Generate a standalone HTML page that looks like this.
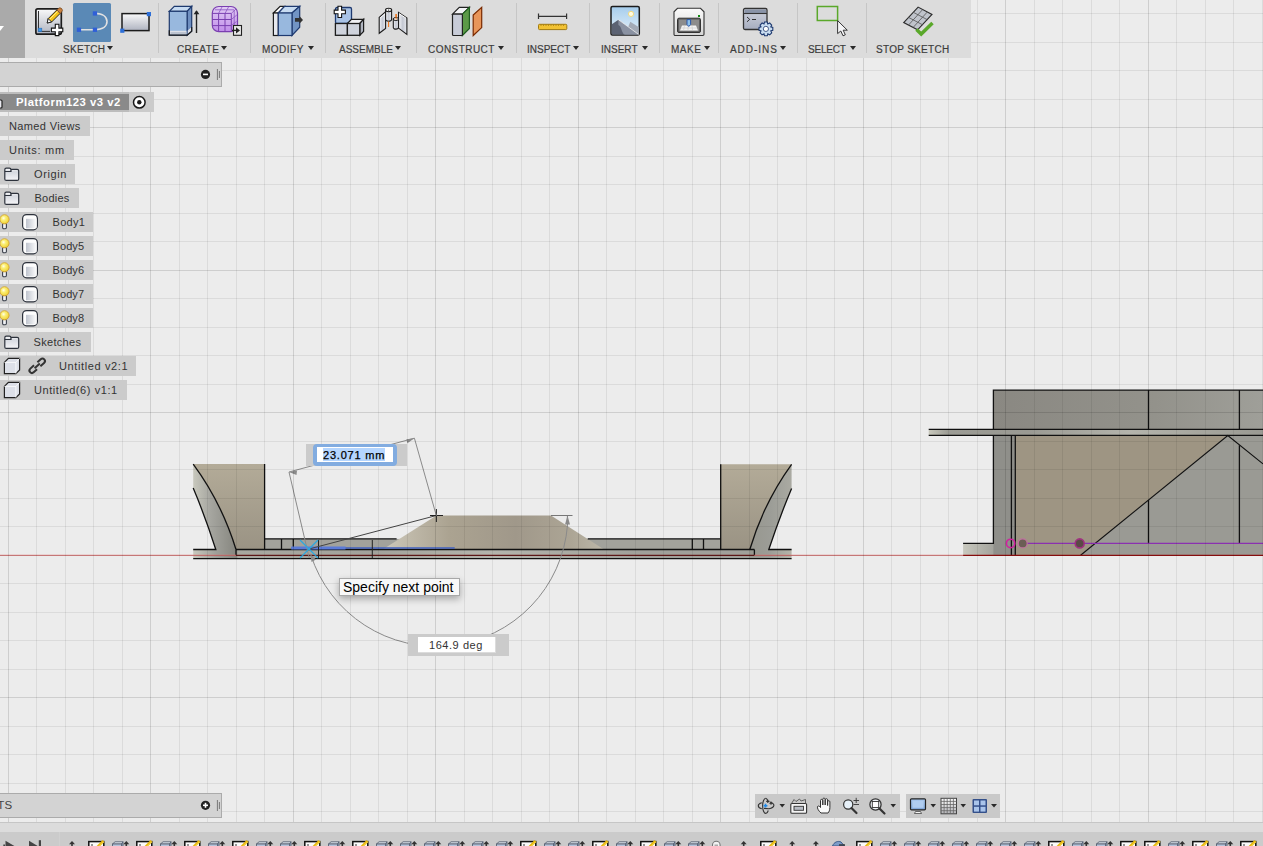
<!DOCTYPE html>
<html><head><meta charset="utf-8"><style>
*{margin:0;padding:0;box-sizing:border-box}
html,body{width:1263px;height:846px;overflow:hidden;background:#ececec;font-family:"Liberation Sans",sans-serif;position:relative}
.a{position:absolute}
.tb{left:0;top:0;width:971px;height:58px;background:#dcdcdc}
.lbl{position:absolute;top:44px;font-size:10px;-webkit-text-stroke:0.2px #3c3c3c;color:#3c3c3c;white-space:nowrap;letter-spacing:0}
.tri{position:absolute;top:46px;width:0;height:0;border-left:3px solid transparent;border-right:3px solid transparent;border-top:4px solid #2a2a2a}
.sep{position:absolute;top:3px;width:1px;height:50px;background:#c6c6c6}
.row{position:absolute;left:0;height:20px;background:#cbcbcb;font-size:11px;color:#333;white-space:nowrap}
.row span{position:absolute;top:4px}
</style></head><body>
<svg class="a" style="left:0;top:0" width="1263" height="846">
<g id="geo"><defs>
<linearGradient id="tanL" x1="0" y1="0" x2="0" y2="1"><stop offset="0" stop-color="#b3ab98"/><stop offset="1" stop-color="#9a9384"/></linearGradient>
<linearGradient id="greyL" x1="0" y1="0" x2="1" y2="0"><stop offset="0" stop-color="#c8c8bd"/><stop offset="0.4" stop-color="#a6a6a0"/><stop offset="1" stop-color="#86867f"/></linearGradient>
<linearGradient id="greyR" x1="1" y1="0" x2="0" y2="0"><stop offset="0" stop-color="#aaaaa2"/><stop offset="0.5" stop-color="#9c9d97"/><stop offset="1" stop-color="#97978f"/></linearGradient>
<linearGradient id="baseG" x1="0" y1="0" x2="1" y2="0"><stop offset="0" stop-color="#c8c8bd"/><stop offset="0.038" stop-color="#9f9f99"/><stop offset="0.0715" stop-color="#86867f"/><stop offset="0.075" stop-color="#a8a8a0"/><stop offset="0.3" stop-color="#a2a29c"/><stop offset="0.5" stop-color="#b4b4ac"/><stop offset="0.75" stop-color="#a0a09a"/><stop offset="0.928" stop-color="#a0a09a"/><stop offset="0.93" stop-color="#97978f"/><stop offset="0.962" stop-color="#9c9c96"/><stop offset="1" stop-color="#b5b5aa"/></linearGradient>
<linearGradient id="trapG" x1="0" y1="0" x2="1" y2="0"><stop offset="0" stop-color="#cdc8ba"/><stop offset="0.3" stop-color="#aba391"/><stop offset="0.6" stop-color="#a0988a"/><stop offset="0.85" stop-color="#aca595"/><stop offset="1" stop-color="#bcb7a9"/></linearGradient>
<linearGradient id="blkG" x1="0" y1="0" x2="1" y2="0"><stop offset="0" stop-color="#8a8882"/><stop offset="0.6" stop-color="#93928b"/><stop offset="1" stop-color="#9f9f99"/></linearGradient>
<linearGradient id="barG" x1="0" y1="0" x2="1" y2="0"><stop offset="0" stop-color="#c8c8bc"/><stop offset="0.06" stop-color="#9c9c95"/><stop offset="0.3" stop-color="#9a9a93"/><stop offset="0.6" stop-color="#b4b4ac"/><stop offset="0.85" stop-color="#a4a49c"/><stop offset="1" stop-color="#9a9a93"/></linearGradient>
<linearGradient id="stepG" x1="0" y1="0" x2="1" y2="0"><stop offset="0" stop-color="#c8c8be"/><stop offset="1" stop-color="#8a8a85"/></linearGradient>
</defs>
<!-- LEFT/RIGHT PART -->
<polygon points="193.2,549.5 791.6,549.5 791.6,558.6 193.2,558.6" fill="url(#baseG)"/>
<rect x="264.6" y="538.9" width="456.1" height="10.6" fill="#a2a29c"/>
<path d="M193.2 464.1Q221.7 502.8 236 549.5V551H215.8V549.5Q205 516 193.2 488.1z" fill="url(#greyL)"/>
<path d="M193.2 464.1H264.6V549.5H236Q221.7 502.8 193.2 464.1z" fill="url(#tanL)"/>
<path d="M791.6 464.3Q763.6 503 749.8 549.5V551H768.8V549.5Q780 516 791.6 488.4z" fill="url(#greyR)"/>
<path d="M720.7 464.3H791.6Q763.6 503 749.8 549.5H720.7z" fill="url(#tanL)"/>
<polygon points="382.7,549.5 436.4,515.5 551,515.5 604.1,549.5" fill="url(#trapG)"/>
<g stroke="#111" stroke-width="1.3" fill="none">
<path d="M193.2 464.1Q221.7 502.8 236 549.5M193.2 488.1Q205 516 215.8 549.5H193.2M264.6 464.1V549.5M264.6 538.9H396.6M587.7 538.9H720.7M281.5 538.9V549.5M293.3 538.9V549.5M692.3 538.9V549.5M703.5 538.9V549.5"/>
<path d="M791.6 464.3Q763.6 503 749.8 549.5M791.6 488.4Q780 516 768.8 549.5H791.6M720.7 464.3V549.5"/>
<path d="M236 549.5H754.4M236 549.5V555.3M754.4 549.5V555.3M193.2 558.6H791.6"/>
</g>
<path d="M236 555.3H754.4" stroke="#6a1a1a" stroke-width="1.2"/>
<path d="M0 555.3H236M754.4 555.3H963" stroke="#e07070" stroke-width="1"/>
<!-- RIGHT OBJECT -->
<rect x="993.4" y="390.1" width="270" height="39.4" fill="url(#blkG)"/>
<rect x="928.7" y="429.4" width="335" height="5.9" fill="url(#barG)"/>
<rect x="963.1" y="543.4" width="52" height="11.9" fill="url(#stepG)"/>
<rect x="993.4" y="435.3" width="22" height="120" fill="#8f8f8a"/>
<polygon points="1015.3,435.3 1227.8,435.3 1080.6,555.3 1015.3,555.3" fill="#9e9583"/>
<polygon points="1227.8,435.3 1263,435.3 1263,555.3 1080.6,555.3" fill="#9a9a94"/>
<g stroke="#111" stroke-width="1.3" fill="none">
<path d="M993.4 429.4V390.1H1263M928.7 429.4H1263M928.7 435.3H1263M1148.5 390.1V429.4M1239.4 390.1V429.4"/>
<path d="M993.4 435.3V543.4H963.1M1011.4 435.3V555.3M1015.3 435.3V555.3M1148.5 500V543.4M1239.4 445.2V543.4"/>
<path d="M1080.6 555.3L1227.8 435.5L1263 463.9" stroke-width="1.1"/>
</g>
<path d="M963.1 555.3H1263" stroke="#9a1010" stroke-width="1.3"/>
<path d="M1022 543.4H1263" stroke="#8a30b0" stroke-width="1.2"/>
<circle cx="1010.6" cy="543.4" r="4.2" fill="none" stroke="#d020a0" stroke-width="1.6"/>
<circle cx="1022.7" cy="543.4" r="4.5" fill="#6a5e55" stroke="#c070a0" stroke-width="1.2"/>
<circle cx="1079.7" cy="543.4" r="4.5" fill="#5a4a45" stroke="#a03080" stroke-width="1.6"/>
<!-- SKETCH OVERLAY -->
<path d="M291.3 548H454.7" stroke="#3f5fbf" stroke-width="1.6"/>
<path d="M291.3 548H345.5" stroke="#5a7ad8" stroke-width="3"/>
<path d="M318.5 540V558M372.3 540V558" stroke="#222" stroke-width="1"/>
<path d="M309 549L436.4 515.5" stroke="#444" stroke-width="1"/>
<path d="M436.4 509V522M430 515.5H443" stroke="#222" stroke-width="1"/>
<path d="M551 515.5H572.5M567.4 515.5V525" stroke="#777" stroke-width="1"/>
<g stroke="#8a8a8a" stroke-width="1" fill="none">
<path d="M289 472L309.2 558M289 472L414.4 438.2L436.4 515.8"/>
<path d="M567.5 525.1A131.7 131.7 0 0 1 310.8 554.8"/>
</g>
<path d="M289 472l8 -1.5l-0.5 4.5z M414.4 438.2l-8 1l1 4z M310.5 554.5l5.5 5l-4.5 2.5z M567.5 515.5l2.5 9l-5 0z" fill="#8a8a8a"/>
<path d="M300 540L318 558M318 540L300 558" stroke="#2aa8e0" stroke-width="1.2"/>
</g>
<path d="M36.5 0V846M65.5 0V846M93.5 0V846M122.5 0V846M179.5 0V846M207.5 0V846M236.5 0V846M264.5 0V846M321.5 0V846M350.5 0V846M378.5 0V846M407.5 0V846M464.5 0V846M492.5 0V846M521.5 0V846M549.5 0V846M606.5 0V846M635.5 0V846M663.5 0V846M692.5 0V846M749.5 0V846M777.5 0V846M806.5 0V846M834.5 0V846M891.5 0V846M920.5 0V846M948.5 0V846M977.5 0V846M1034.5 0V846M1062.5 0V846M1091.5 0V846M1119.5 0V846M1176.5 0V846M1205.5 0V846M1233.5 0V846M1262.5 0V846M0 13.5H1263M0 42.5H1263M0 70.5H1263M0 99.5H1263M0 156.5H1263M0 184.5H1263M0 213.5H1263M0 241.5H1263M0 298.5H1263M0 327.5H1263M0 355.5H1263M0 384.5H1263M0 441.5H1263M0 469.5H1263M0 498.5H1263M0 526.5H1263M0 583.5H1263M0 612.5H1263M0 640.5H1263M0 669.5H1263M0 726.5H1263M0 754.5H1263M0 783.5H1263M0 811.5H1263" stroke="rgba(0,0,0,0.072)" stroke-width="1" fill="none"/>
<path d="M8.5 0V846M150.5 0V846M293.5 0V846M435.5 0V846M578.5 0V846M720.5 0V846M863.5 0V846M1005.5 0V846M1148.5 0V846M0 127.5H1263M0 270.5H1263M0 412.5H1263M0 555.5H1263M0 697.5H1263M0 840.5H1263" stroke="rgba(0,0,0,0.125)" stroke-width="1" fill="none"/>
</svg>
<div class="a tb">
 <div class="a" style="left:0;top:0;width:25px;height:58px;background:#aaaaaa"></div>
 <div class="a" style="left:72.5px;top:2.5px;width:38px;height:39px;background:#5a89b6;border-radius:1.5px"></div>
 <svg class="a" style="left:0;top:0" width="971" height="58">
<defs>
<linearGradient id="gW" x1="0" y1="0" x2="0" y2="1"><stop offset="0" stop-color="#fafafa"/><stop offset="1" stop-color="#aeb3c0"/></linearGradient>
<linearGradient id="gPu" x1="0" y1="0" x2="0" y2="1"><stop offset="0" stop-color="#d6b8ef"/><stop offset="1" stop-color="#b27ae6"/></linearGradient>
<linearGradient id="gSky" x1="0" y1="0" x2="0" y2="1"><stop offset="0" stop-color="#a6cdec"/><stop offset="1" stop-color="#e4f1fa"/></linearGradient>
<linearGradient id="gMk" x1="0" y1="0" x2="0" y2="1"><stop offset="0" stop-color="#fbfbfb"/><stop offset="1" stop-color="#d4d4d4"/></linearGradient>
<linearGradient id="gAd" x1="0" y1="0" x2="0" y2="1"><stop offset="0" stop-color="#d2d5de"/><stop offset="1" stop-color="#a6adbf"/></linearGradient>
</defs>
<!-- left arrow -->
<path d="M0 26H4L0 31z" fill="#fff"/>
<!-- create sketch -->
<rect x="35.9" y="8.8" width="25.4" height="25.4" rx="1.8" fill="url(#gW)" stroke="#1c1c1c" stroke-width="1.7"/>
<path d="M38.5 11V31.4H50" stroke="#333" stroke-width="1" fill="none"/>
<rect x="38.2" y="28.2" width="3.6" height="3.4" fill="#3f9bef" stroke="#2a6ab0" stroke-width="0.6"/>
<g transform="translate(47.2 23) rotate(-45)">
<path d="M0 0L3.8 -2.4H16V2.4H3.8z" fill="#f4c31a" stroke="#222" stroke-width="0.9"/>
<path d="M3.8 -0.8H16" stroke="#fff3a0" stroke-width="0.8"/>
<path d="M0 0L3.8 -2.4V2.4z" fill="#fff" stroke="#222" stroke-width="0.9"/>
<path d="M16 -2.4H18A2.4 2.4 0 0 1 18 2.4H16z" fill="#c9803f" stroke="#7a4a20" stroke-width="0.7"/>
</g>
<path d="M55.3 24.2h3.6v3.9h3.9v3.6h-3.9v3.9h-3.6v-3.9h-3.9v-3.6h3.9z" fill="#fff" stroke="#111" stroke-width="1.1"/>
<!-- line/arc active -->
<path d="M79 29.7H95M95 13.4C103 13.4 107 17 107 21.6C107 26.2 103 29.7 95 29.7" stroke="#e2e2e2" stroke-width="1.6" fill="none"/>
<rect x="76.8" y="27.6" width="4.3" height="4.3" fill="#2f5fd8"/><rect x="92.8" y="27.6" width="4.3" height="4.3" fill="#2f5fd8"/><rect x="92.8" y="11.3" width="4.3" height="4.3" fill="#2f5fd8"/>
<!-- rectangle -->
<rect x="122" y="13.6" width="27" height="17" fill="url(#gW)" stroke="#1c1c1c" stroke-width="1.5"/>
<rect x="146.8" y="12" width="4.2" height="4.2" fill="#2d6fd8"/><rect x="120.2" y="28.6" width="4.2" height="4.2" fill="#2d6fd8"/>
<!-- extrude -->
<path d="M169.3 11.3L174.3 6.3H191.7L187.1 11.3z" fill="#c8dcf2" stroke="#1e3a6e" stroke-width="1.2"/>
<path d="M187.1 11.3L191.7 6.3V31.2L187.1 35.1z" fill="#6f8fc0" stroke="#1e3a6e" stroke-width="1.2"/>
<rect x="169.3" y="11.3" width="17.8" height="23.8" fill="#98b8de" stroke="#1e3a6e" stroke-width="1.2"/>
<path d="M169.9 30.8H186.5V34.5H169.9z" fill="#dde0e8"/><path d="M170.5 32H186V34H170.5z" fill="#bcc3d0"/>
<path d="M187.7 30.6L191.1 27.6V31L187.7 34.4z" fill="#dde0e8"/>
<path d="M169.3 30.2V35.1H187.1L191.7 31.2V27" fill="none" stroke="#1c1c1c" stroke-width="1.2"/>
<path d="M196.5 33V11" stroke="#222" stroke-width="1.4"/><path d="M193.6 14.2L196.5 10.2L199.4 14.2z" fill="#222"/>
<!-- purple mesh -->
<defs><linearGradient id="gPu2" x1="0" y1="0" x2="0" y2="1"><stop offset="0" stop-color="#e2cdf5"/><stop offset="1" stop-color="#c08de9"/></linearGradient></defs>
<rect x="212.3" y="6.5" width="25.2" height="25.2" rx="6.5" fill="url(#gPu2)" stroke="#7a3fb0" stroke-width="1.2"/>
<path d="M212.3 13.4H231.3V31.7M218.6 13.4V31.7M225 13.4V31.7M212.3 19.5H231.3M212.3 25.6H231.3" stroke="#7a3fb0" stroke-width="1" fill="none"/>
<path d="M215 9.8H234M218.6 13.4L222 7M225 13.4L228.5 7M231.3 13.4L236 9M231.3 19.5L236.8 15M231.3 25.6L236.5 21.5M234.2 10V28" stroke="#8a55c0" stroke-width="0.8" fill="none"/>
<rect x="233.5" y="25.5" width="8" height="9.8" fill="#e8e8e8" stroke="#222" stroke-width="1.1"/>
<path d="M232 30.4H236.5" stroke="#222" stroke-width="1.3"/><path d="M236 27.3L240 30.4L236 33.5z" fill="#222"/>
<!-- modify -->
<path d="M273.4 13L280.1 6.3H284.6L278.3 13z" fill="#fff" stroke="#1c1c1c" stroke-width="1.2"/>
<rect x="273.4" y="13" width="4.9" height="22.5" fill="#e6e8ee" stroke="#1c1c1c" stroke-width="1.2"/>
<path d="M278.3 13L284.6 6.3H299.7L292 13z" fill="#c7dbf1" stroke="#1f3a70" stroke-width="1.2"/>
<path d="M292 13L299.7 6.3V27.2L292 35.5z" fill="#7294c4" stroke="#1f3a70" stroke-width="1.2"/>
<rect x="278.3" y="13" width="13.7" height="22.5" fill="#98b8de" stroke="#1f3a70" stroke-width="1.2"/>
<path d="M295 18H299.4V15.9L303 20L299.4 23.8V21.8H295z" fill="#333"/>
<!-- assemble -->
<rect x="335.5" y="7.5" width="16" height="16" rx="1.5" fill="#a9c3e6" stroke="#1f3a70" stroke-width="1.3"/>
<path d="M347.7 23.3L351.5 19.4" stroke="#1f3a70" stroke-width="1"/>
<rect x="335.4" y="23.5" width="12" height="11.8" fill="#cfd3dc" stroke="#1c1c1c" stroke-width="1.3"/>
<path d="M347.4 23.5L351.5 19.4H363.6L359.8 23.5z" fill="#f0f0f3" stroke="#1c1c1c" stroke-width="1.2"/>
<path d="M359.8 23.5L363.6 19.4V31.4L359.8 35.3z" fill="#b0b5c0" stroke="#1c1c1c" stroke-width="1.2"/>
<rect x="347.4" y="23.5" width="12.4" height="11.8" fill="#cfd3dc" stroke="#1c1c1c" stroke-width="1.3"/>
<path d="M338 6.3h3.6v3.8h3.8v3.6h-3.8v3.8h-3.6v-3.8h-3.8v-3.6h3.8z" fill="#fff" stroke="#111" stroke-width="1.1"/>
<!-- joint -->
<defs><linearGradient id="gJ" x1="0" y1="0" x2="1" y2="0"><stop offset="0" stop-color="#f4f5f8"/><stop offset="0.5" stop-color="#c4c8d2"/><stop offset="1" stop-color="#e8eaef"/></linearGradient></defs>
<path d="M379.2 17.3L385.6 11.8V28.5L379.2 33.3z" fill="url(#gJ)" stroke="#1c1c1c" stroke-width="1.1"/>
<path d="M380.3 17.8L385.6 13.3" stroke="#fff" stroke-width="1"/>
<path d="M385.6 10V19.6A3 1.6 0 0 0 391.6 19.6V10z" fill="url(#gJ)" stroke="#1c1c1c" stroke-width="1.1"/>
<ellipse cx="388.6" cy="10" rx="3" ry="1.7" fill="#fafafa" stroke="#1c1c1c" stroke-width="1.1"/>
<circle cx="388.6" cy="10.1" r="0.7" fill="#111"/>
<path d="M388.6 21.4V27M396.1 14V19.4" stroke="#f07010" stroke-width="1"/>
<path d="M398.5 12.4L406.9 18V34.5L398.5 28.1z" fill="url(#gJ)" stroke="#1c1c1c" stroke-width="1.1"/>
<path d="M399.2 13.6L406 18.2" stroke="#fff" stroke-width="1"/>
<path d="M393.3 19V27.6A2.6 1.5 0 0 0 398.5 27.6V19z" fill="url(#gJ)" stroke="#1c1c1c" stroke-width="1.1"/>
<ellipse cx="395.9" cy="19" rx="2.6" ry="1.5" fill="#fafafa" stroke="#1c1c1c" stroke-width="1"/>
<path d="M396.1 14V19.4" stroke="#f07010" stroke-width="1"/>
<!-- construct -->
<path d="M452.5 14.1L459.3 7.4H469.4L462.4 14.1z" fill="#f2f2f5" stroke="#222" stroke-width="1.2"/>
<path d="M462.4 14.1L469.4 7.4V28.5L462.4 35.5z" fill="#5c9a48" stroke="#1f5f1f" stroke-width="1.2"/>
<rect x="452.5" y="14.1" width="9.9" height="21.4" rx="1" fill="#c8ccd8" stroke="#222" stroke-width="1.2"/>
<path d="M473.2 15L481.7 7.4V27.6L473.2 35.5z" fill="#e8955a" stroke="#7a2a00" stroke-width="1.2"/>
<!-- inspect -->
<path d="M538.5 16.3H566.6M538.5 13.6V19M566.6 13.6V19" stroke="#333" stroke-width="1.2" fill="none"/>
<rect x="538.5" y="24.3" width="28.3" height="5.3" rx="1" fill="#f2c233" stroke="#a07a10" stroke-width="1"/>
<path d="M541 24.5v1.5M543.5 24.5v1.5M546 24.5v1.5M548.5 24.5v1.5M551 24.5v1.5M553.5 24.5v1.5M556 24.5v1.5M558.5 24.5v1.5M561 24.5v1.5M563.5 24.5v1.5" stroke="#a07a10" stroke-width="0.7"/>
<!-- insert -->
<rect x="611" y="6.6" width="28.3" height="28.5" rx="1.5" fill="url(#gSky)" stroke="#1c1c1c" stroke-width="1.5"/>
<circle cx="631" cy="13.9" r="2.6" fill="#fffbe0" stroke="#f0d880" stroke-width="1"/>
<path d="M630.3 21.8L638.6 27V34.4H625z" fill="#a3aab6"/>
<path d="M611.8 24.2L618.4 19.7L638.6 34.4H611.8z" fill="#5b6272"/>
<path d="M618.4 19.7L638.6 34.4H624C621 31 622 27 618.4 25z" fill="#8a92a2"/>
<path d="M618.4 19.7L638.6 34.4" stroke="#f4f4f4" stroke-width="0.8"/>
<!-- make -->
<path d="M677.5 8.3H700.5L704 11.8V34.3A1.2 1.2 0 0 1 702.8 35.5H675.2A1.2 1.2 0 0 1 674 34.3V11.8z" fill="url(#gMk)" stroke="#333" stroke-width="1.1"/>
<rect x="698" y="15" width="2" height="2" fill="#108a10"/>
<rect x="677.5" y="18.2" width="23" height="14.3" rx="1.5" fill="#5e5e5e" stroke="#333" stroke-width="1"/>
<rect x="679" y="19.6" width="20" height="11.5" fill="#8c8c8c"/>
<path d="M682 25.5H696L698 30.5H680z" fill="#f4f4f4"/>
<path d="M684.5 25.5L683.5 30.5M688 25.5V30.5M692 25.5L692.5 30.5M681 28H697" stroke="#c8c8c8" stroke-width="0.6"/>
<path d="M687 19.6V24.5L688.8 26.5L690.6 24.5V19.6z" fill="#8ec0e8" stroke="#1f4fa8" stroke-width="0.9"/>
<!-- add-ins -->
<rect x="743.5" y="8.5" width="23.5" height="21" rx="1.5" fill="url(#gAd)" stroke="#333" stroke-width="1.3"/>
<rect x="744.5" y="9.5" width="21.5" height="4" fill="#8a94a8"/>
<path d="M743.5 13.5H767" stroke="#333" stroke-width="1.1"/>
<path d="M747 17L749.7 19.4L747 21.8M752 19.5H756" stroke="#222" stroke-width="0.9" fill="none"/>
<g transform="translate(765.9 28.9)">
<path d="M-1.4 -6.9H1.4L1.9 -5L3.8 -5.9L5.8 -3.9L4.9 -2L6.9 -1.4V1.4L4.9 2L5.8 3.9L3.8 5.9L1.9 5L1.4 6.9H-1.4L-1.9 5L-3.8 5.9L-5.8 3.9L-4.9 2L-6.9 1.4V-1.4L-4.9 -2L-5.8 -3.9L-3.8 -5.9L-1.9 -5z" fill="#c8dcf0" stroke="#1f3a70" stroke-width="1.1"/>
<circle r="2.6" fill="#fff" stroke="#1f3a70" stroke-width="0.8"/>
</g>
<!-- select -->
<rect x="817.3" y="6.5" width="20.3" height="14" fill="none" stroke="#5aa82a" stroke-width="1.5"/>
<path d="M837.6 20.6V33.6L840.8 31L843 35.8L845.3 34.8L843.2 30.2H847.3z" fill="#f4f4f6" stroke="#222" stroke-width="0.9"/>
<!-- stop sketch -->
<path d="M903.7 22.6L918.1 7.1L932 14.4L917.6 29.8z" fill="#c0c4cc" stroke="#2a2a2a" stroke-width="1.1"/>
<path d="M908.5 17.4L922.8 24.9M913.3 12.3L927.3 19.7M908.4 25.2L922.6 9.6M913 27.6L927.3 12" stroke="#555" stroke-width="0.8"/>
<path d="M916.5 29.5L921.2 34L932.5 23" stroke="#5aa82a" stroke-width="3.5" fill="none"/>
</svg>
<div class="lbl" style="left:63px;letter-spacing:0.3px">SKETCH</div><div class="tri" style="left:107px"></div>
 <div class="sep" style="left:158px"></div>
 <div class="lbl" style="left:177px;letter-spacing:0.4px">CREATE</div><div class="tri" style="left:221px"></div>
 <div class="sep" style="left:250px"></div>
 <div class="lbl" style="left:262px;letter-spacing:0.5px">MODIFY</div><div class="tri" style="left:308px"></div>
 <div class="sep" style="left:325px"></div>
 <div class="lbl" style="left:339px">ASSEMBLE</div><div class="tri" style="left:395px"></div>
 <div class="sep" style="left:416px"></div>
 <div class="lbl" style="left:428px;letter-spacing:0.45px">CONSTRUCT</div><div class="tri" style="left:498px"></div>
 <div class="sep" style="left:516px"></div>
 <div class="lbl" style="left:527px">INSPECT</div><div class="tri" style="left:573px"></div>
 <div class="sep" style="left:589px"></div>
 <div class="lbl" style="left:601px">INSERT</div><div class="tri" style="left:642px"></div>
 <div class="sep" style="left:659px"></div>
 <div class="lbl" style="left:671px;letter-spacing:0.5px">MAKE</div><div class="tri" style="left:704px"></div>
 <div class="sep" style="left:718px"></div>
 <div class="lbl" style="left:730px;letter-spacing:0.95px">ADD-INS</div><div class="tri" style="left:780px"></div>
 <div class="sep" style="left:797px"></div>
 <div class="lbl" style="left:808px;letter-spacing:-0.2px">SELECT</div><div class="tri" style="left:850px"></div>
 <div class="sep" style="left:866px"></div>
 <div class="lbl" style="left:876px;letter-spacing:0.3px">STOP SKETCH</div>
</div>
<!-- dim input -->
<div class="a" style="left:306px;top:444px;width:101px;height:22px;background:#cbcbcb"></div>
<div class="a" style="left:313px;top:444px;width:84px;height:22px;background:#82ace0;border-radius:4px"></div>
<div class="a" style="left:317px;top:447px;width:76px;height:15px;background:#fff"></div>
<div class="a" style="left:323px;top:448px;width:62px;height:13px;background:#b4d5fe"></div>
<div class="a" style="left:323px;top:448px;font-size:11px;line-height:14px;color:#000;white-space:nowrap;letter-spacing:0.8px;-webkit-text-stroke:0.25px #000">23.071 mm</div>
<!-- tooltip -->
<div class="a" style="left:339px;top:578px;width:121px;height:18px;background:#f8f8f8;border:1px solid #a8a8a8;box-shadow:0 3px 7px rgba(0,0,0,0.3)"></div>
<div class="a" style="left:343px;top:579px;font-size:14px;line-height:16px;color:#000;white-space:nowrap">Specify next point</div>
<!-- angle -->
<div class="a" style="left:408px;top:634px;width:101px;height:22px;background:#cbcbcb"></div>
<div class="a" style="left:418px;top:636.5px;width:77.5px;height:16px;background:#fff;border:1px solid #dcdcdc;border-width:0 1px 1px 0"></div>
<div class="a" style="left:429px;top:638px;font-size:11px;line-height:15px;color:#333;letter-spacing:0.55px;white-space:nowrap">164.9 deg</div>
<!-- browser -->
<div class="a" style="left:-1px;top:62px;width:223px;height:25px;background:#d3d3d3;border:1px solid #ababab"></div>
<div class="row" style="top:92px;width:129px;background:#8a8a8a;color:#fff;font-weight:bold;border-top:2px solid #bdbdbd;border-bottom:2px solid #bdbdbd"><span style="left:16px;top:1.5px;font-size:11.3px;letter-spacing:0.52px">Platform123 v3 v2</span></div>
<div class="row" style="top:92px;left:129px;width:25px;background:#cbcbcb"></div>
<div class="row" style="top:116px;width:90px"><span style="left:9px;letter-spacing:0.36px">Named Views</span></div>
<div class="row" style="top:140px;width:74px"><span style="left:9px;letter-spacing:0.7px">Units: mm</span></div>
<div class="row" style="top:164px;width:75px"><span style="left:34px;letter-spacing:0.6px">Origin</span></div>
<div class="row" style="top:188px;width:79px"><span style="left:34.5px;letter-spacing:0.22px">Bodies</span></div>
<div class="row" style="top:212px;width:93px"><span style="left:52.5px;letter-spacing:0.3px">Body1</span></div>
<div class="row" style="top:236px;width:93px"><span style="left:52.5px;letter-spacing:0.1px">Body5</span></div>
<div class="row" style="top:260px;width:93px"><span style="left:52.5px;letter-spacing:0.1px">Body6</span></div>
<div class="row" style="top:284px;width:93px"><span style="left:52.5px;letter-spacing:0.1px">Body7</span></div>
<div class="row" style="top:308px;width:93px"><span style="left:52.5px;letter-spacing:0.1px">Body8</span></div>
<div class="row" style="top:332px;width:91px"><span style="left:33.5px;letter-spacing:0.31px">Sketches</span></div>
<div class="row" style="top:356px;width:136px"><span style="left:59px;letter-spacing:0.62px">Untitled v2:1</span></div>
<div class="row" style="top:380px;width:127px"><span style="left:34px;letter-spacing:0.57px">Untitled(6) v1:1</span></div>
<svg class="a" style="left:0;top:60px" width="230" height="345" viewBox="0 60 230 345">
<defs><linearGradient id="gCyl" x1="0" y1="0" x2="1" y2="0"><stop offset="0" stop-color="#fff"/><stop offset="0.35" stop-color="#c9ccd6"/><stop offset="1" stop-color="#fdfdfd"/></linearGradient>
<linearGradient id="gCyl2" x1="0" y1="0" x2="1" y2="0"><stop offset="0" stop-color="#bfc4ce"/><stop offset="1" stop-color="#fdfdfd"/></linearGradient><linearGradient id="gFold" x1="0" y1="0" x2="0" y2="1"><stop offset="0" stop-color="#fdfdfd"/><stop offset="0.3" stop-color="#d6d9e0"/><stop offset="1" stop-color="#f6f6f8"/></linearGradient>
<radialGradient id="gBulb" cx="0.4" cy="0.38" r="0.65"><stop offset="0" stop-color="#fffef0"/><stop offset="0.35" stop-color="#fbef78"/><stop offset="0.85" stop-color="#f2d840"/><stop offset="1" stop-color="#dcb030"/></radialGradient></defs>
<circle cx="205.5" cy="74.4" r="4.6" fill="#222"/><rect x="203" y="73.6" width="5" height="1.6" fill="#fff"/>
<path d="M217.4 69V80M219.4 71V78" stroke="#777" stroke-width="1"/>
<circle cx="139.3" cy="102.3" r="5.8" fill="#fff" stroke="#1a1a1a" stroke-width="1.5"/><circle cx="139.3" cy="102.3" r="2.2" fill="#1a1a1a"/>
<rect x="-3" y="100" width="5" height="8" rx="1" fill="#e8e8ee" stroke="#222" stroke-width="1.2"/>
<path d="M4.8 171.5V178.9a1.5 1.5 0 0 0 1.5 1.5H17.2a1.5 1.5 0 0 0 1.5 -1.5V170.8a1.5 1.5 0 0 0 -1.5 -1.5H11.6L10.9 170.0V169.7a1.5 1.5 0 0 0 -1.5 -1.5H6.3a1.5 1.5 0 0 0 -1.5 1.5z" fill="url(#gFold)" stroke="#2d323c" stroke-width="1.2"/><path d="M4.8 171.5H10.9L11.6 170.6" stroke="#2d323c" stroke-width="1.1" fill="none"/>
<path d="M4.8 195.5V202.9a1.5 1.5 0 0 0 1.5 1.5H17.2a1.5 1.5 0 0 0 1.5 -1.5V194.8a1.5 1.5 0 0 0 -1.5 -1.5H11.6L10.9 194.0V193.7a1.5 1.5 0 0 0 -1.5 -1.5H6.3a1.5 1.5 0 0 0 -1.5 1.5z" fill="url(#gFold)" stroke="#2d323c" stroke-width="1.2"/><path d="M4.8 195.5H10.9L11.6 194.6" stroke="#2d323c" stroke-width="1.1" fill="none"/>
<path d="M4.8 339.5V346.9a1.5 1.5 0 0 0 1.5 1.5H17.2a1.5 1.5 0 0 0 1.5 -1.5V338.8a1.5 1.5 0 0 0 -1.5 -1.5H11.6L10.9 338.0V337.7a1.5 1.5 0 0 0 -1.5 -1.5H6.3a1.5 1.5 0 0 0 -1.5 1.5z" fill="url(#gFold)" stroke="#2d323c" stroke-width="1.2"/><path d="M4.8 339.5H10.9L11.6 338.6" stroke="#2d323c" stroke-width="1.1" fill="none"/>
<rect x="2.6" y="223.2" width="3.8" height="5.6" rx="1.2" fill="#f0f2f6" stroke="#3a3f4a" stroke-width="1.1"/><circle cx="4.5" cy="219.3" r="4.6" fill="url(#gBulb)" stroke="#d0a030" stroke-width="0.8"/>
<rect x="22.6" y="214.6" width="14.8" height="15.2" rx="4" fill="#fdfdfd" stroke="#2d323c" stroke-width="1.2"/><rect x="26" y="218.8" width="10.5" height="9.5" fill="url(#gCyl2)"/>
<rect x="2.6" y="247.2" width="3.8" height="5.6" rx="1.2" fill="#f0f2f6" stroke="#3a3f4a" stroke-width="1.1"/><circle cx="4.5" cy="243.3" r="4.6" fill="url(#gBulb)" stroke="#d0a030" stroke-width="0.8"/>
<rect x="22.6" y="238.6" width="14.8" height="15.2" rx="4" fill="#fdfdfd" stroke="#2d323c" stroke-width="1.2"/><rect x="26" y="242.8" width="10.5" height="9.5" fill="url(#gCyl2)"/>
<rect x="2.6" y="271.2" width="3.8" height="5.6" rx="1.2" fill="#f0f2f6" stroke="#3a3f4a" stroke-width="1.1"/><circle cx="4.5" cy="267.3" r="4.6" fill="url(#gBulb)" stroke="#d0a030" stroke-width="0.8"/>
<rect x="22.6" y="262.6" width="14.8" height="15.2" rx="4" fill="#fdfdfd" stroke="#2d323c" stroke-width="1.2"/><rect x="26" y="266.8" width="10.5" height="9.5" fill="url(#gCyl2)"/>
<rect x="2.6" y="295.2" width="3.8" height="5.6" rx="1.2" fill="#f0f2f6" stroke="#3a3f4a" stroke-width="1.1"/><circle cx="4.5" cy="291.3" r="4.6" fill="url(#gBulb)" stroke="#d0a030" stroke-width="0.8"/>
<rect x="22.6" y="286.6" width="14.8" height="15.2" rx="4" fill="#fdfdfd" stroke="#2d323c" stroke-width="1.2"/><rect x="26" y="290.8" width="10.5" height="9.5" fill="url(#gCyl2)"/>
<rect x="2.6" y="319.2" width="3.8" height="5.6" rx="1.2" fill="#f0f2f6" stroke="#3a3f4a" stroke-width="1.1"/><circle cx="4.5" cy="315.3" r="4.6" fill="url(#gBulb)" stroke="#d0a030" stroke-width="0.8"/>
<rect x="22.6" y="310.6" width="14.8" height="15.2" rx="4" fill="#fdfdfd" stroke="#2d323c" stroke-width="1.2"/><rect x="26" y="314.8" width="10.5" height="9.5" fill="url(#gCyl2)"/>
<path d="M4.4 362.4L8.4 358.4H19.6V370.0L15.9 373.59999999999997H4.4z" fill="#dde0e8" stroke="#222" stroke-width="1.2"/><path d="M4.4 362.4H15.9V373.59999999999997M15.9 362.4L19.6 358.4" stroke="#fff" stroke-width="0.8" fill="none"/>
<path d="M4.4 386.4L8.4 382.4H19.6V394.0L15.9 397.59999999999997H4.4z" fill="#dde0e8" stroke="#222" stroke-width="1.2"/><path d="M4.4 386.4H15.9V397.59999999999997M15.9 386.4L19.6 382.4" stroke="#fff" stroke-width="0.8" fill="none"/>
<g transform="translate(37.2 365.8) rotate(-42)" stroke="#333" stroke-width="2" fill="none"><path d="M-2 -2.5H-7A2.5 2.5 0 0 0 -7 2.5H-2.5"/><path d="M2 2.5H7A2.5 2.5 0 0 0 7 -2.5H2.5"/><path d="M-3.5 0H3.5"/></g>
</svg>
<!-- comments -->
<div class="a" style="left:-1px;top:793px;width:223px;height:25px;background:#d3d3d3;border:1px solid #ababab"></div>
<div class="a" style="left:-57px;top:798px;font-size:11.5px;line-height:14px;color:#444;white-space:nowrap;letter-spacing:0.3px">COMMENTS</div>
<svg class="a" style="left:195px;top:793px" width="30" height="25" viewBox="195 793 30 25"><circle cx="205.5" cy="805.3" r="4.6" fill="#222"/><rect x="203" y="804.5" width="5" height="1.6" fill="#fff"/><rect x="204.7" y="802.8" width="1.6" height="5" fill="#fff"/><path d="M217.4 800V811M219.4 802V809" stroke="#777" stroke-width="1"/></svg>

<!-- timeline -->
<div class="a" style="left:0;top:822px;width:1263px;height:24px;background:#dcdcdc;border-top:1px solid #c6c6c6"></div>
<div class="a" style="left:0;top:832px;width:1263px;height:14px;background:#cbcbcb"></div>
<svg class="a" style="left:0;top:822px" width="1263" height="24" viewBox="0 822 1263 24">
<path d="M5.5 840.7L14.4 846H5.5z" fill="#444"/><rect x="3.3" y="844.5" width="1.7" height="2" fill="#444"/>
<path d="M29 840.7L37.7 846H29z" fill="#444"/><rect x="38.8" y="840.2" width="2.2" height="6" fill="#444"/>
<path d="M59.5 832V846" stroke="#d0d0d0" stroke-width="1"/>
<path d="M69 844.3L72 841L75 844.3z" fill="#333"/><rect x="71.2" y="843" width="1.6" height="3" fill="#333"/>
<path d="M740.7 844.3L743.7 841L746.7 844.3z" fill="#333"/><rect x="742.9000000000001" y="843" width="1.6" height="3" fill="#333"/>
<path d="M789.2 844.3L792.2 841L795.2 844.3z" fill="#333"/><rect x="791.4000000000001" y="843" width="1.6" height="3" fill="#333"/>
<path d="M812.9 844.3L815.9 841L818.9 844.3z" fill="#333"/><rect x="815.1" y="843" width="1.6" height="3" fill="#333"/>
<rect x="88.8" y="841.6" width="15" height="8" fill="#fafafa" stroke="#111" stroke-width="1.5"/><path d="M92.0 844V848" stroke="#333" stroke-width="1"/><path d="M96.5 848L103.5 841" stroke="#e8b810" stroke-width="2.6"/><path d="M97.3 848.2L103.8 841.7" stroke="#f8e060" stroke-width="1"/>
<path d="M112.5 844L115.0 841.8H123.0L121.5 844z" fill="#dfe6ef" stroke="#5a6475" stroke-width="0.9"/><rect x="112.5" y="844" width="9" height="4" fill="#b4c4da" stroke="#5a6475" stroke-width="0.9"/><path d="M121.5 844L123.0 841.8V848L121.5 849z" fill="#8fa3c0" stroke="#5a6475" stroke-width="0.9"/><path d="M123.3 844.3L126.3 841L129.3 844.3z" fill="#333"/><rect x="125.5" y="843" width="1.6" height="3" fill="#333"/>
<rect x="136.8" y="841.6" width="15" height="8" fill="#fafafa" stroke="#111" stroke-width="1.5"/><path d="M140.0 844V848" stroke="#333" stroke-width="1"/><path d="M144.5 848L151.5 841" stroke="#e8b810" stroke-width="2.6"/><path d="M145.3 848.2L151.8 841.7" stroke="#f8e060" stroke-width="1"/>
<path d="M160.5 844L163.0 841.8H171.0L169.5 844z" fill="#dfe6ef" stroke="#5a6475" stroke-width="0.9"/><rect x="160.5" y="844" width="9" height="4" fill="#b4c4da" stroke="#5a6475" stroke-width="0.9"/><path d="M169.5 844L171.0 841.8V848L169.5 849z" fill="#8fa3c0" stroke="#5a6475" stroke-width="0.9"/><path d="M171.3 844.3L174.3 841L177.3 844.3z" fill="#333"/><rect x="173.5" y="843" width="1.6" height="3" fill="#333"/>
<rect x="184.8" y="841.6" width="15" height="8" fill="#fafafa" stroke="#111" stroke-width="1.5"/><path d="M188.0 844V848" stroke="#333" stroke-width="1"/><path d="M192.5 848L199.5 841" stroke="#e8b810" stroke-width="2.6"/><path d="M193.3 848.2L199.8 841.7" stroke="#f8e060" stroke-width="1"/>
<path d="M208.5 844L211.0 841.8H219.0L217.5 844z" fill="#dfe6ef" stroke="#5a6475" stroke-width="0.9"/><rect x="208.5" y="844" width="9" height="4" fill="#b4c4da" stroke="#5a6475" stroke-width="0.9"/><path d="M217.5 844L219.0 841.8V848L217.5 849z" fill="#8fa3c0" stroke="#5a6475" stroke-width="0.9"/><path d="M219.3 844.3L222.3 841L225.3 844.3z" fill="#333"/><rect x="221.5" y="843" width="1.6" height="3" fill="#333"/>
<rect x="232.8" y="841.6" width="15" height="8" fill="#fafafa" stroke="#111" stroke-width="1.5"/><path d="M236.0 844V848" stroke="#333" stroke-width="1"/><path d="M240.5 848L247.5 841" stroke="#e8b810" stroke-width="2.6"/><path d="M241.3 848.2L247.8 841.7" stroke="#f8e060" stroke-width="1"/>
<path d="M256.5 844L259.0 841.8H267.0L265.5 844z" fill="#dfe6ef" stroke="#5a6475" stroke-width="0.9"/><rect x="256.5" y="844" width="9" height="4" fill="#b4c4da" stroke="#5a6475" stroke-width="0.9"/><path d="M265.5 844L267.0 841.8V848L265.5 849z" fill="#8fa3c0" stroke="#5a6475" stroke-width="0.9"/><path d="M267.3 844.3L270.3 841L273.3 844.3z" fill="#333"/><rect x="269.5" y="843" width="1.6" height="3" fill="#333"/>
<path d="M280.5 844L283.0 841.8H291.0L289.5 844z" fill="#dfe6ef" stroke="#5a6475" stroke-width="0.9"/><rect x="280.5" y="844" width="9" height="4" fill="#b4c4da" stroke="#5a6475" stroke-width="0.9"/><path d="M289.5 844L291.0 841.8V848L289.5 849z" fill="#8fa3c0" stroke="#5a6475" stroke-width="0.9"/><path d="M291.3 844.3L294.3 841L297.3 844.3z" fill="#333"/><rect x="293.5" y="843" width="1.6" height="3" fill="#333"/>
<rect x="304.8" y="841.6" width="15" height="8" fill="#fafafa" stroke="#111" stroke-width="1.5"/><path d="M308.0 844V848" stroke="#333" stroke-width="1"/><path d="M312.5 848L319.5 841" stroke="#e8b810" stroke-width="2.6"/><path d="M313.3 848.2L319.8 841.7" stroke="#f8e060" stroke-width="1"/>
<path d="M328.5 844L331.0 841.8H339.0L337.5 844z" fill="#dfe6ef" stroke="#5a6475" stroke-width="0.9"/><rect x="328.5" y="844" width="9" height="4" fill="#b4c4da" stroke="#5a6475" stroke-width="0.9"/><path d="M337.5 844L339.0 841.8V848L337.5 849z" fill="#8fa3c0" stroke="#5a6475" stroke-width="0.9"/><path d="M339.3 844.3L342.3 841L345.3 844.3z" fill="#333"/><rect x="341.5" y="843" width="1.6" height="3" fill="#333"/>
<rect x="352.8" y="841.6" width="15" height="8" fill="#fafafa" stroke="#111" stroke-width="1.5"/><path d="M356.0 844V848" stroke="#333" stroke-width="1"/><path d="M360.5 848L367.5 841" stroke="#e8b810" stroke-width="2.6"/><path d="M361.3 848.2L367.8 841.7" stroke="#f8e060" stroke-width="1"/>
<path d="M376.5 844L379.0 841.8H387.0L385.5 844z" fill="#dfe6ef" stroke="#5a6475" stroke-width="0.9"/><rect x="376.5" y="844" width="9" height="4" fill="#b4c4da" stroke="#5a6475" stroke-width="0.9"/><path d="M385.5 844L387.0 841.8V848L385.5 849z" fill="#8fa3c0" stroke="#5a6475" stroke-width="0.9"/><path d="M387.3 844.3L390.3 841L393.3 844.3z" fill="#333"/><rect x="389.5" y="843" width="1.6" height="3" fill="#333"/>
<path d="M400.5 844L403.0 841.8H411.0L409.5 844z" fill="#dfe6ef" stroke="#5a6475" stroke-width="0.9"/><rect x="400.5" y="844" width="9" height="4" fill="#b4c4da" stroke="#5a6475" stroke-width="0.9"/><path d="M409.5 844L411.0 841.8V848L409.5 849z" fill="#8fa3c0" stroke="#5a6475" stroke-width="0.9"/><path d="M411.3 844.3L414.3 841L417.3 844.3z" fill="#333"/><rect x="413.5" y="843" width="1.6" height="3" fill="#333"/>
<path d="M424.5 844L427.0 841.8H435.0L433.5 844z" fill="#dfe6ef" stroke="#5a6475" stroke-width="0.9"/><rect x="424.5" y="844" width="9" height="4" fill="#b4c4da" stroke="#5a6475" stroke-width="0.9"/><path d="M433.5 844L435.0 841.8V848L433.5 849z" fill="#8fa3c0" stroke="#5a6475" stroke-width="0.9"/><path d="M435.3 844.3L438.3 841L441.3 844.3z" fill="#333"/><rect x="437.5" y="843" width="1.6" height="3" fill="#333"/>
<path d="M448.5 844L451.0 841.8H459.0L457.5 844z" fill="#dfe6ef" stroke="#5a6475" stroke-width="0.9"/><rect x="448.5" y="844" width="9" height="4" fill="#b4c4da" stroke="#5a6475" stroke-width="0.9"/><path d="M457.5 844L459.0 841.8V848L457.5 849z" fill="#8fa3c0" stroke="#5a6475" stroke-width="0.9"/><path d="M459.3 844.3L462.3 841L465.3 844.3z" fill="#333"/><rect x="461.5" y="843" width="1.6" height="3" fill="#333"/>
<path d="M472.5 844L475.0 841.8H483.0L481.5 844z" fill="#dfe6ef" stroke="#5a6475" stroke-width="0.9"/><rect x="472.5" y="844" width="9" height="4" fill="#b4c4da" stroke="#5a6475" stroke-width="0.9"/><path d="M481.5 844L483.0 841.8V848L481.5 849z" fill="#8fa3c0" stroke="#5a6475" stroke-width="0.9"/><path d="M483.3 844.3L486.3 841L489.3 844.3z" fill="#333"/><rect x="485.5" y="843" width="1.6" height="3" fill="#333"/>
<path d="M496.5 844L499.0 841.8H507.0L505.5 844z" fill="#dfe6ef" stroke="#5a6475" stroke-width="0.9"/><rect x="496.5" y="844" width="9" height="4" fill="#b4c4da" stroke="#5a6475" stroke-width="0.9"/><path d="M505.5 844L507.0 841.8V848L505.5 849z" fill="#8fa3c0" stroke="#5a6475" stroke-width="0.9"/><path d="M507.3 844.3L510.3 841L513.3 844.3z" fill="#333"/><rect x="509.5" y="843" width="1.6" height="3" fill="#333"/>
<rect x="520.8" y="841.6" width="15" height="8" fill="#fafafa" stroke="#111" stroke-width="1.5"/><path d="M524.0 844V848" stroke="#333" stroke-width="1"/><path d="M528.5 848L535.5 841" stroke="#e8b810" stroke-width="2.6"/><path d="M529.3 848.2L535.8 841.7" stroke="#f8e060" stroke-width="1"/>
<path d="M544.5 844L547.0 841.8H555.0L553.5 844z" fill="#dfe6ef" stroke="#5a6475" stroke-width="0.9"/><rect x="544.5" y="844" width="9" height="4" fill="#b4c4da" stroke="#5a6475" stroke-width="0.9"/><path d="M553.5 844L555.0 841.8V848L553.5 849z" fill="#8fa3c0" stroke="#5a6475" stroke-width="0.9"/><path d="M555.3 844.3L558.3 841L561.3 844.3z" fill="#333"/><rect x="557.5" y="843" width="1.6" height="3" fill="#333"/>
<path d="M568.5 844L571.0 841.8H579.0L577.5 844z" fill="#dfe6ef" stroke="#5a6475" stroke-width="0.9"/><rect x="568.5" y="844" width="9" height="4" fill="#b4c4da" stroke="#5a6475" stroke-width="0.9"/><path d="M577.5 844L579.0 841.8V848L577.5 849z" fill="#8fa3c0" stroke="#5a6475" stroke-width="0.9"/><path d="M579.3 844.3L582.3 841L585.3 844.3z" fill="#333"/><rect x="581.5" y="843" width="1.6" height="3" fill="#333"/>
<rect x="592.8" y="841.6" width="15" height="8" fill="#fafafa" stroke="#111" stroke-width="1.5"/><path d="M596.0 844V848" stroke="#333" stroke-width="1"/><path d="M600.5 848L607.5 841" stroke="#e8b810" stroke-width="2.6"/><path d="M601.3 848.2L607.8 841.7" stroke="#f8e060" stroke-width="1"/>
<path d="M616.5 844L619.0 841.8H627.0L625.5 844z" fill="#dfe6ef" stroke="#5a6475" stroke-width="0.9"/><rect x="616.5" y="844" width="9" height="4" fill="#b4c4da" stroke="#5a6475" stroke-width="0.9"/><path d="M625.5 844L627.0 841.8V848L625.5 849z" fill="#8fa3c0" stroke="#5a6475" stroke-width="0.9"/><path d="M627.3 844.3L630.3 841L633.3 844.3z" fill="#333"/><rect x="629.5" y="843" width="1.6" height="3" fill="#333"/>
<rect x="640.8" y="841.6" width="15" height="8" fill="#fafafa" stroke="#111" stroke-width="1.5"/><path d="M644.0 844V848" stroke="#333" stroke-width="1"/><path d="M648.5 848L655.5 841" stroke="#e8b810" stroke-width="2.6"/><path d="M649.3 848.2L655.8 841.7" stroke="#f8e060" stroke-width="1"/>
<path d="M664.5 844L667.0 841.8H675.0L673.5 844z" fill="#dfe6ef" stroke="#5a6475" stroke-width="0.9"/><rect x="664.5" y="844" width="9" height="4" fill="#b4c4da" stroke="#5a6475" stroke-width="0.9"/><path d="M673.5 844L675.0 841.8V848L673.5 849z" fill="#8fa3c0" stroke="#5a6475" stroke-width="0.9"/><path d="M675.3 844.3L678.3 841L681.3 844.3z" fill="#333"/><rect x="677.5" y="843" width="1.6" height="3" fill="#333"/>
<path d="M688.5 844L691.0 841.8H699.0L697.5 844z" fill="#dfe6ef" stroke="#5a6475" stroke-width="0.9"/><rect x="688.5" y="844" width="9" height="4" fill="#b4c4da" stroke="#5a6475" stroke-width="0.9"/><path d="M697.5 844L699.0 841.8V848L697.5 849z" fill="#8fa3c0" stroke="#5a6475" stroke-width="0.9"/><path d="M699.3 844.3L702.3 841L705.3 844.3z" fill="#333"/><rect x="701.5" y="843" width="1.6" height="3" fill="#333"/>
<path d="M712.5 846V845A3.8 3.8 0 0 1 720.1 845V846" fill="#f2f2f2" stroke="#777" stroke-width="1.1"/><rect x="714.5" y="844.5" width="3.5" height="1.5" fill="#aaa"/>
<rect x="760.8" y="841.6" width="15" height="8" fill="#fafafa" stroke="#111" stroke-width="1.5"/><path d="M764.0 844V848" stroke="#333" stroke-width="1"/><path d="M768.5 848L775.5 841" stroke="#e8b810" stroke-width="2.6"/><path d="M769.3 848.2L775.8 841.7" stroke="#f8e060" stroke-width="1"/>
<path d="M832.5 846C834.0 842 838.0 840.5 841.0 842L844.5 846z" fill="#7d9cc8" stroke="#3a5a8a" stroke-width="1"/><path d="M839.0 845H845.0" stroke="#333" stroke-width="1.4"/>
<rect x="856.8" y="841.6" width="15" height="8" fill="#fafafa" stroke="#111" stroke-width="1.5"/><path d="M860.0 844V848" stroke="#333" stroke-width="1"/><path d="M864.5 848L871.5 841" stroke="#e8b810" stroke-width="2.6"/><path d="M865.3 848.2L871.8 841.7" stroke="#f8e060" stroke-width="1"/>
<path d="M880.5 844L883.0 841.8H891.0L889.5 844z" fill="#dfe6ef" stroke="#5a6475" stroke-width="0.9"/><rect x="880.5" y="844" width="9" height="4" fill="#b4c4da" stroke="#5a6475" stroke-width="0.9"/><path d="M889.5 844L891.0 841.8V848L889.5 849z" fill="#8fa3c0" stroke="#5a6475" stroke-width="0.9"/><path d="M891.3 844.3L894.3 841L897.3 844.3z" fill="#333"/><rect x="893.5" y="843" width="1.6" height="3" fill="#333"/>
<path d="M904.5 844L907.0 841.8H915.0L913.5 844z" fill="#dfe6ef" stroke="#5a6475" stroke-width="0.9"/><rect x="904.5" y="844" width="9" height="4" fill="#b4c4da" stroke="#5a6475" stroke-width="0.9"/><path d="M913.5 844L915.0 841.8V848L913.5 849z" fill="#8fa3c0" stroke="#5a6475" stroke-width="0.9"/><path d="M915.3 844.3L918.3 841L921.3 844.3z" fill="#333"/><rect x="917.5" y="843" width="1.6" height="3" fill="#333"/>
<path d="M928.5 844L931.0 841.8H939.0L937.5 844z" fill="#dfe6ef" stroke="#5a6475" stroke-width="0.9"/><rect x="928.5" y="844" width="9" height="4" fill="#b4c4da" stroke="#5a6475" stroke-width="0.9"/><path d="M937.5 844L939.0 841.8V848L937.5 849z" fill="#8fa3c0" stroke="#5a6475" stroke-width="0.9"/><path d="M939.3 844.3L942.3 841L945.3 844.3z" fill="#333"/><rect x="941.5" y="843" width="1.6" height="3" fill="#333"/>
<path d="M952.5 844L955.0 841.8H963.0L961.5 844z" fill="#dfe6ef" stroke="#5a6475" stroke-width="0.9"/><rect x="952.5" y="844" width="9" height="4" fill="#b4c4da" stroke="#5a6475" stroke-width="0.9"/><path d="M961.5 844L963.0 841.8V848L961.5 849z" fill="#8fa3c0" stroke="#5a6475" stroke-width="0.9"/><path d="M963.3 844.3L966.3 841L969.3 844.3z" fill="#333"/><rect x="965.5" y="843" width="1.6" height="3" fill="#333"/>
<path d="M976.5 844L979.0 841.8H987.0L985.5 844z" fill="#dfe6ef" stroke="#5a6475" stroke-width="0.9"/><rect x="976.5" y="844" width="9" height="4" fill="#b4c4da" stroke="#5a6475" stroke-width="0.9"/><path d="M985.5 844L987.0 841.8V848L985.5 849z" fill="#8fa3c0" stroke="#5a6475" stroke-width="0.9"/><path d="M987.3 844.3L990.3 841L993.3 844.3z" fill="#333"/><rect x="989.5" y="843" width="1.6" height="3" fill="#333"/>
<path d="M1000.5 844L1003.0 841.8H1011.0L1009.5 844z" fill="#dfe6ef" stroke="#5a6475" stroke-width="0.9"/><rect x="1000.5" y="844" width="9" height="4" fill="#b4c4da" stroke="#5a6475" stroke-width="0.9"/><path d="M1009.5 844L1011.0 841.8V848L1009.5 849z" fill="#8fa3c0" stroke="#5a6475" stroke-width="0.9"/><path d="M1011.3 844.3L1014.3 841L1017.3 844.3z" fill="#333"/><rect x="1013.5" y="843" width="1.6" height="3" fill="#333"/>
<path d="M1024.5 844L1027.0 841.8H1035.0L1033.5 844z" fill="#dfe6ef" stroke="#5a6475" stroke-width="0.9"/><rect x="1024.5" y="844" width="9" height="4" fill="#b4c4da" stroke="#5a6475" stroke-width="0.9"/><path d="M1033.5 844L1035.0 841.8V848L1033.5 849z" fill="#8fa3c0" stroke="#5a6475" stroke-width="0.9"/><path d="M1035.3 844.3L1038.3 841L1041.3 844.3z" fill="#333"/><rect x="1037.5" y="843" width="1.6" height="3" fill="#333"/>
<rect x="1048.8" y="841.6" width="15" height="8" fill="#fafafa" stroke="#111" stroke-width="1.5"/><path d="M1052.0 844V848" stroke="#333" stroke-width="1"/><path d="M1056.5 848L1063.5 841" stroke="#e8b810" stroke-width="2.6"/><path d="M1057.3 848.2L1063.8 841.7" stroke="#f8e060" stroke-width="1"/>
<path d="M1072.5 844L1075.0 841.8H1083.0L1081.5 844z" fill="#dfe6ef" stroke="#5a6475" stroke-width="0.9"/><rect x="1072.5" y="844" width="9" height="4" fill="#b4c4da" stroke="#5a6475" stroke-width="0.9"/><path d="M1081.5 844L1083.0 841.8V848L1081.5 849z" fill="#8fa3c0" stroke="#5a6475" stroke-width="0.9"/><path d="M1083.3 844.3L1086.3 841L1089.3 844.3z" fill="#333"/><rect x="1085.5" y="843" width="1.6" height="3" fill="#333"/>
<path d="M1096.5 844L1099.0 841.8H1107.0L1105.5 844z" fill="#dfe6ef" stroke="#5a6475" stroke-width="0.9"/><rect x="1096.5" y="844" width="9" height="4" fill="#b4c4da" stroke="#5a6475" stroke-width="0.9"/><path d="M1105.5 844L1107.0 841.8V848L1105.5 849z" fill="#8fa3c0" stroke="#5a6475" stroke-width="0.9"/><path d="M1107.3 844.3L1110.3 841L1113.3 844.3z" fill="#333"/><rect x="1109.5" y="843" width="1.6" height="3" fill="#333"/>
<rect x="1120.8" y="841.6" width="15" height="8" fill="#fafafa" stroke="#111" stroke-width="1.5"/><path d="M1124.0 844V848" stroke="#333" stroke-width="1"/><path d="M1128.5 848L1135.5 841" stroke="#e8b810" stroke-width="2.6"/><path d="M1129.3 848.2L1135.8 841.7" stroke="#f8e060" stroke-width="1"/>
<rect x="1144.8" y="841.6" width="15" height="8" fill="#fafafa" stroke="#111" stroke-width="1.5"/><path d="M1148.0 844V848" stroke="#333" stroke-width="1"/><path d="M1152.5 848L1159.5 841" stroke="#e8b810" stroke-width="2.6"/><path d="M1153.3 848.2L1159.8 841.7" stroke="#f8e060" stroke-width="1"/>
<path d="M1168.5 844L1171.0 841.8H1179.0L1177.5 844z" fill="#dfe6ef" stroke="#5a6475" stroke-width="0.9"/><rect x="1168.5" y="844" width="9" height="4" fill="#b4c4da" stroke="#5a6475" stroke-width="0.9"/><path d="M1177.5 844L1179.0 841.8V848L1177.5 849z" fill="#8fa3c0" stroke="#5a6475" stroke-width="0.9"/><path d="M1179.3 844.3L1182.3 841L1185.3 844.3z" fill="#333"/><rect x="1181.5" y="843" width="1.6" height="3" fill="#333"/>
<rect x="1192.8" y="841.6" width="15" height="8" fill="#fafafa" stroke="#111" stroke-width="1.5"/><path d="M1196.0 844V848" stroke="#333" stroke-width="1"/><path d="M1200.5 848L1207.5 841" stroke="#e8b810" stroke-width="2.6"/><path d="M1201.3 848.2L1207.8 841.7" stroke="#f8e060" stroke-width="1"/>
<path d="M1216.5 844L1219.0 841.8H1227.0L1225.5 844z" fill="#dfe6ef" stroke="#5a6475" stroke-width="0.9"/><rect x="1216.5" y="844" width="9" height="4" fill="#b4c4da" stroke="#5a6475" stroke-width="0.9"/><path d="M1225.5 844L1227.0 841.8V848L1225.5 849z" fill="#8fa3c0" stroke="#5a6475" stroke-width="0.9"/><path d="M1227.3 844.3L1230.3 841L1233.3 844.3z" fill="#333"/><rect x="1229.5" y="843" width="1.6" height="3" fill="#333"/>
<rect x="1240.8" y="841.6" width="15" height="8" fill="#fafafa" stroke="#111" stroke-width="1.5"/><path d="M1244.0 844V848" stroke="#333" stroke-width="1"/><path d="M1248.5 848L1255.5 841" stroke="#e8b810" stroke-width="2.6"/><path d="M1249.3 848.2L1255.8 841.7" stroke="#f8e060" stroke-width="1"/>
</svg>
<div class="a" style="left:755px;top:794px;width:145px;height:24px;background:#c9c9c9"></div>
<div class="a" style="left:906px;top:794px;width:94px;height:24px;background:#c9c9c9"></div>
<svg class="a" style="left:750px;top:790px" width="255" height="32" viewBox="750 790 255 32">
<defs><linearGradient id="gMon" x1="0" y1="0" x2="0" y2="1"><stop offset="0" stop-color="#a9c8ee"/><stop offset="1" stop-color="#7fa6d8"/></linearGradient>
<linearGradient id="gGrid" x1="0" y1="0" x2="0" y2="1"><stop offset="0" stop-color="#fcfcfc"/><stop offset="1" stop-color="#b4b4b8"/></linearGradient></defs>
<g fill="none" stroke="#333" stroke-width="1.1">
<path d="M765.8 798.2A3.2 7.6 0 0 0 765.8 813.4A3.2 7.6 0 0 0 768.3 810.5"/>
<path d="M765.8 798.2A3.2 7.6 0 0 1 768.2 801.8"/>
<path d="M761.8 802.8A6 3.3 0 0 0 761.8 808.8"/>
<path d="M770.2 802.3A7.8 3.6 0 0 1 769 808.7Q767 808.4 764 808.4"/>
</g>
<path d="M766.2 801.4H769.5M767.8 799.8V803M769.4 803.2H772.6M771 801.6V804.8" stroke="#333" stroke-width="1.1"/>
<path d="M765.5 803.8V807.6M763.6 805.7H767.4" stroke="#1e88e8" stroke-width="1.6"/>
<path d="M779.5 804L785 804L782.2 807.5z" fill="#2a2a2a"/>
<rect x="790.8" y="803.5" width="15.8" height="9.8" rx="1" fill="#f4f4f4" stroke="#333" stroke-width="1.1"/>
<rect x="794" y="806.3" width="9.5" height="4" fill="#b8bcc4" stroke="#333" stroke-width="0.9"/>
<path d="M791.5 803.5L794 799.5L796 801.5L799.5 799L801 801L805.5 799.5V803.5" fill="none" stroke="#555" stroke-width="0.9"/>
<path d="M821 813C818.5 811 817 808 817.5 806.5C818 805.5 819.5 806 820.5 807.5V800.5C820.5 799 822.5 799 822.8 800.5V805V799.2C822.8 797.7 825 797.7 825.2 799.2V805V799.8C825.2 798.3 827.5 798.3 827.6 799.8V805.5V801.8C827.6 800.3 829.8 800.3 829.9 801.8V807.5C829.9 810 829 812 828 813z" fill="#fafafa" stroke="#333" stroke-width="1"/>
<circle cx="848.2" cy="804.5" r="4.6" fill="#e6f0f8" stroke="#333" stroke-width="1.2"/>
<path d="M851.5 808L856.5 813" stroke="#333" stroke-width="2.2" stroke-linecap="round"/>
<path d="M853.5 800.5H859M856.2 797.8V803M853.5 804.5H859" stroke="#333" stroke-width="0.9"/>
<circle cx="875.5" cy="804.5" r="5.6" fill="#f0f4f8" stroke="#333" stroke-width="1.3"/>
<rect x="872.3" y="801.5" width="6.4" height="6" fill="#fff" stroke="#333" stroke-width="0.9"/>
<path d="M879.5 808.5L884.5 813.5" stroke="#333" stroke-width="2.2" stroke-linecap="round"/>
<path d="M890.5 804L896 804L893.2 807.5z" fill="#2a2a2a"/>
<rect x="910.5" y="798.8" width="15" height="11" rx="1" fill="url(#gMon)" stroke="#222" stroke-width="1.2"/>
<rect x="912.5" y="800.8" width="11" height="7" fill="#b0cdf0"/>
<path d="M915.5 811.5H920.5L921.5 813.5H914.5z" fill="#f4f4f4" stroke="#333" stroke-width="0.7"/>
<path d="M930.5 804L936 804L933.2 807.5z" fill="#2a2a2a"/>
<rect x="941" y="798.3" width="15.5" height="15.5" fill="url(#gGrid)" stroke="#444" stroke-width="1"/>
<path d="M944.1 798.3V813.8M947.2 798.3V813.8M950.3 798.3V813.8M953.4 798.3V813.8M941 801.4H956.5M941 804.5H956.5M941 807.6H956.5M941 810.7H956.5" stroke="#666" stroke-width="0.8"/>
<path d="M960.5 804L966 804L963.2 807.5z" fill="#2a2a2a"/>
<rect x="972.5" y="799" width="14.5" height="14" rx="1" fill="#34508a"/>
<rect x="974" y="800.5" width="5" height="4.8" fill="#a9c4ea"/><rect x="980.5" y="800.5" width="5" height="4.8" fill="#a9c4ea"/>
<rect x="974" y="806.8" width="5" height="4.8" fill="#a9c4ea"/><rect x="980.5" y="806.8" width="5" height="4.8" fill="#a9c4ea"/>
<path d="M991 804L997 804L994 807.5z" fill="#2a2a2a"/>
</svg>

</body></html>
